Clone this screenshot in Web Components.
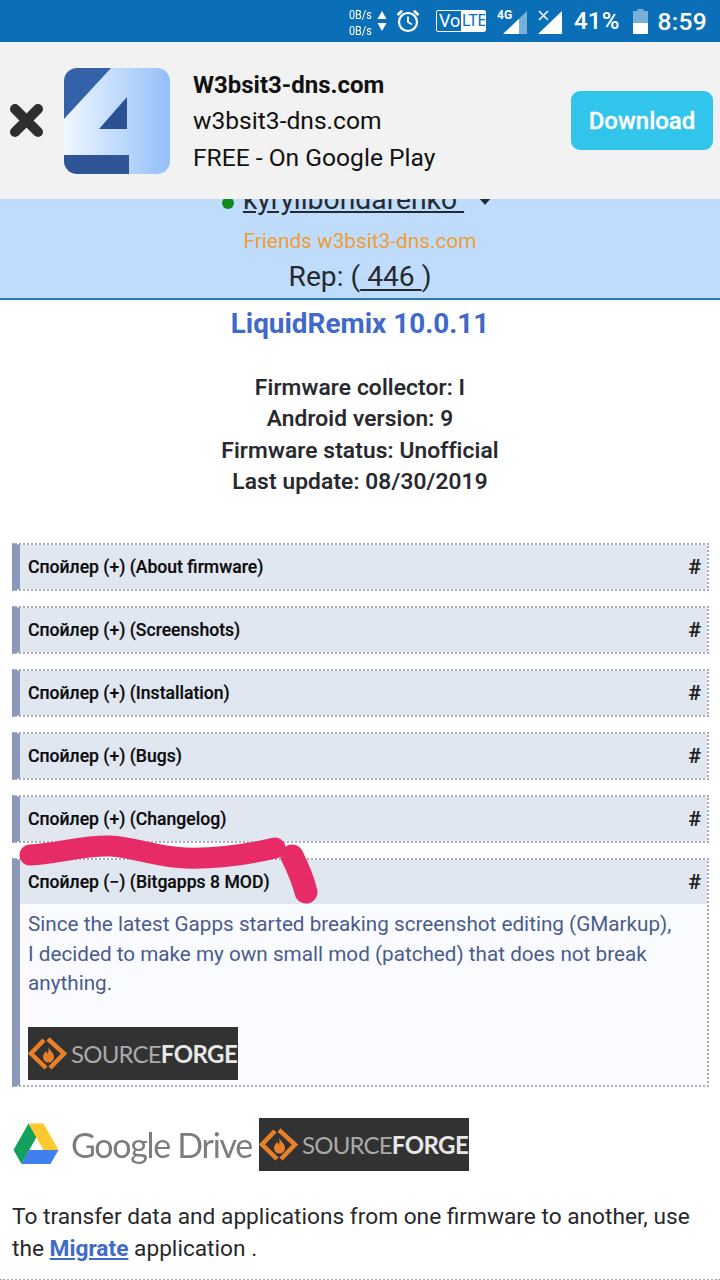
<!DOCTYPE html>
<html>
<head>
<meta charset="utf-8">
<style>
    html, body { margin: 0; padding: 0; background: #fff; }
    body { width: 720px; height: 1280px; overflow: hidden; position: relative; font-family: Roboto, "Noto Sans", sans-serif; }
</style>
</head>
<body>
<status-bar></status-bar>
<ad-banner></ad-banner>
<profile-band></profile-band>
<firmware-info></firmware-info>
<spoiler-list>
    <spoiler-box title="Спойлер (+) (About firmware)"></spoiler-box>
    <spoiler-box title="Спойлер (+) (Screenshots)"></spoiler-box>
    <spoiler-box title="Спойлер (+) (Installation)"></spoiler-box>
    <spoiler-box title="Спойлер (+) (Bugs)"></spoiler-box>
    <spoiler-box title="Спойлер (+) (Changelog)"></spoiler-box>
    <spoiler-box title="Спойлер (−) (Bitgapps 8 MOD)" open>
        Since the latest Gapps started breaking screenshot editing (GMarkup),<br>
        I decided to make my own small mod (patched) that does not break<br>
        anything.
        <sf-logo slot="media"></sf-logo>
    </spoiler-box>
</spoiler-list>
<download-links></download-links>
<migrate-note></migrate-note>
<pen-stroke></pen-stroke>

<script>
class StatusBar extends HTMLElement {
    constructor() {
        super();
        this.attachShadow({ mode: 'open' }).innerHTML = `
            <style>
                :host { display: flex; align-items: center; height: 42px; background: #0b6fb8; color: #fff; box-sizing: border-box; font-family: Roboto, sans-serif; position: relative; z-index: 1; padding-left: 349px; }
                .speed { display: flex; flex-direction: column; font-size: 13.500px; line-height: 16px; width: 27px; transform: scaleX(.8); transform-origin: left; margin-top: 2px; white-space: nowrap; }
                svg { display: block; flex: none; }
                .pct { font-size: 24px; font-weight: 500; margin-left: 12px; letter-spacing: .2px; }
                .time { font-size: 24.500px; font-weight: 500; margin-left: 10px; letter-spacing: .3px; }
                .volte { display: flex; margin-left: 15px; height: 22px; width: 50px; border: 1.500px solid #fff; box-sizing: border-box; font-size: 18px; line-height: 19px; border-radius: 2px; overflow: hidden; }
                .volte b { font-weight: 400; padding-left: 2px; width: 22px; flex: none; }
                .volte i { font-style: normal; flex: 1; background: #fff; color: #0b6fb8; font-size: 16px; letter-spacing: -.3px; padding-left: 1px; white-space: nowrap; }
            </style>
            <div class="speed"><span>0B/s</span><span>0B/s</span></div>
            <svg style="margin-left:1px" width="10" height="24" viewBox="0 0 10 24"><path d="M5 2l4.500 8H.5z" fill="#fff"/><path d="M5 22l4.500-8H.5z" fill="#fff"/></svg>
            <svg style="margin-left:8px" width="26" height="26" viewBox="0 0 26 26" fill="none" stroke="#fff"><circle cx="13" cy="14" r="9" stroke-width="2.200"/><path d="M13 8.500V14l4 2.500" stroke-width="1.800"/><path d="M2.500 7L7 2.800M23.500 7L19 2.800" stroke-width="2.600"/></svg>
            <div class="volte"><b>Vo</b><i>LTE</i></div>
            <svg style="margin-left:11px" width="31" height="28" viewBox="0 0 31 28"><text x="0" y="12" font-family="Roboto, sans-serif" font-size="12" font-weight="700" fill="#fff">4G</text><path d="M6 27L30 4v23z" fill="#fff" opacity=".45"/><path d="M6 27L22 12v15z" fill="#fff"/></svg>
            <svg style="margin-left:10px" width="24" height="28" viewBox="0 0 24 28"><path d="M0 27L24 4v23z" fill="#fff"/><path d="M1 4l9 9M10 4l-9 9" stroke="#fff" stroke-width="1.500"/></svg>
            <span class="pct">41%</span>
            <svg style="margin-left:13px" width="15" height="25" viewBox="0 0 15 25"><path d="M4.500 0h6v2H15v23H0V2h4.500z" fill="#fff" opacity=".45"/><path d="M0 14h15v11H0z" fill="#fff"/></svg>
            <span class="time">8:59</span>
        `;
    }
}

class AdBanner extends HTMLElement {
    constructor() {
        super();
        this.attachShadow({ mode: 'open' }).innerHTML = `
            <style>
                :host { display: flex; align-items: center; height: 157px; background: #f2f2f2; box-sizing: border-box; font-family: Roboto, sans-serif; color: #111; position: relative; z-index: 1; }
                .close { margin-left: 9px; flex: none; display: block; }
                .logo { margin-left: 20px; flex: none; display: block; }
                .text { margin-left: 23px; flex: 1; font-size: 24.600px; line-height: 36.500px; padding-top: 2px; white-space: nowrap; }
                .text b { display: block; font-weight: 700; font-size: 24px; }
                .text span { display: block; }
                .btn { width: 142px; height: 59px; margin-right: 7px; background: #31c5ec; color: #fff; font-size: 24px; font-weight: 500; -webkit-text-stroke: .3px #fff; border-radius: 9px; display: flex; align-items: center; justify-content: center; }
            </style>
            <svg class="close" width="35" height="35" viewBox="0 0 35 35"><path d="M6 6l23 23M29 6L6 29" stroke="#2f2d2d" stroke-width="10" stroke-linecap="round"/></svg>
            <svg class="logo" width="106" height="106" viewBox="0 0 106 106">
                <defs>
                    <linearGradient id="g" x1="0" x2="1" y1="0" y2="0"><stop offset="0" stop-color="#eff7ff"/><stop offset="1" stop-color="#93bff8"/></linearGradient>
                    <clipPath id="c"><rect width="106" height="106" rx="13"/></clipPath>
                </defs>
                <g clip-path="url(#c)">
                    <rect width="106" height="106" fill="url(#g)"/>
                    <path d="M0 0h47L0 51z" fill="#3561a8"/>
                    <path d="M63 29v32H35z" fill="#2a5192"/>
                    <path d="M0 87h65v19H0z" fill="#2f5597"/>
                </g>
            </svg>
            <div class="text"><b>W3bsit3-dns.com</b><span>w3bsit3-dns.com</span><span>FREE - On Google Play</span></div>
            <div class="btn">Download</div>
        `;
    }
}

// sits partly under the ad banner, as on the real page
class ProfileBand extends HTMLElement {
    constructor() {
        super();
        this.attachShadow({ mode: 'open' }).innerHTML = `
            <style>
                :host { display: block; margin-top: -30px; height: 131px; background: #bfdcfd; border-bottom: 2px solid #2a7cba; box-sizing: border-box; font-family: Roboto, sans-serif; color: #26292e; text-align: center; }
                .name { height: 30px; padding-top: 16px; font-size: 28.300px; line-height: 30px; display: flex; justify-content: center; align-items: center; padding-right: 7px; }
                .name u { text-underline-offset: 2px; }
                .dot { width: 12px; height: 12px; border-radius: 50%; background: #0f8a1f; margin-right: 9px; margin-top: 5px; }
                .arrow { width: 0; height: 0; border: 6.500px solid transparent; border-top: 7px solid #26292e; border-bottom: 0; margin-left: 15px; margin-top: 2px; }
                .group { color: #f09c30; font-size: 20.800px; line-height: 24px; margin-top: 14px; }
                .rep { font-size: 28.200px; line-height: 32px; margin-top: 8px; }
                .rep u { text-underline-offset: 3px; }
            </style>
            <div class="name"><i class="dot"></i><u>kyrylibondarenko&nbsp;</u><i class="arrow"></i></div>
            <div class="group">Friends w3bsit3-dns.com</div>
            <div class="rep">Rep: (<u>&nbsp;446&nbsp;</u>)</div>
        `;
    }
}

class FirmwareInfo extends HTMLElement {
    constructor() {
        super();
        this.attachShadow({ mode: 'open' }).innerHTML = `
            <style>
                :host { display: block; text-align: center; font-family: Roboto, sans-serif; color: #26282c; height: 243px; box-sizing: border-box; padding-top: 7px; }
                h1 { margin: 0; font-size: 27.900px; line-height: 34px; font-weight: 700; color: #4069c9; }
                .rows { margin-top: 31px; font-size: 22.700px; line-height: 31.400px; font-weight: 500; letter-spacing: .15px; -webkit-text-stroke: .2px #26282c; }
            </style>
            <h1>LiquidRemix 10.0.11</h1>
            <div class="rows">
                Firmware collector: I<br>
                Android version: 9<br>
                Firmware status: Unofficial<br>
                Last update: 08/30/2019
            </div>
        `;
    }
}

class SpoilerList extends HTMLElement {
    constructor() {
        super();
        this.attachShadow({ mode: 'open' }).innerHTML = `
            <style>
                :host { display: flex; flex-direction: column; gap: 15px; padding: 0 11px 0 12px; }
            </style>
            <slot></slot>
        `;
    }
}

class SpoilerBox extends HTMLElement {
    constructor() {
        super();
        const title = this.getAttribute('title');
        this.removeAttribute('title');
        this.attachShadow({ mode: 'open' }).innerHTML = `
            <style>
                :host { display: block; border: 2px dotted #a9adb3; border-left: 8px solid #8a99ba; box-sizing: border-box; font-family: Roboto, sans-serif; background: #fafbff; }
                .head { display: flex; align-items: center; justify-content: space-between; height: 44px; background: #e1e7f0; padding: 0 6px 0 8px; font-size: 17.600px; font-weight: 500; color: #0c0c0e; -webkit-text-stroke: .2px #0c0c0e; }
                .hash { font-size: 21px; color: #222; }
                .body { display: none; padding: 6px 8px 5px 8px; font-size: 20.700px; line-height: 29.500px; color: #4a5b8c; white-space: nowrap; }
                :host([open]) .body { display: block; }
                ::slotted([slot=media]) { margin-top: 28px; }
            </style>
            <div class="head"><span>${title}</span><span class="hash">#</span></div>
            <div class="body"><slot></slot><slot name="media"></slot></div>
        `;
    }
}

class SfLogo extends HTMLElement {
    constructor() {
        super();
        this.attachShadow({ mode: 'open' }).innerHTML = `
            <style>
                :host { display: flex; align-items: center; width: 210px; height: 53px; background: #333232; font-family: Lato, "Open Sans", sans-serif; flex: none; }
                svg { flex: none; display: block; }
                span { font-size: 24px; line-height: 53px; color: #a9a9a9; margin-left: 3px; letter-spacing: -.8px; white-space: nowrap; font-weight: 400; }
                b { color: #e8e8e8; font-weight: 700; letter-spacing: -.6px; }
            </style>
            <svg width="40" height="53" viewBox="0 0 40 53" fill="none">
                <path d="M16 13L3 26.500 18 41" stroke="#e8802a" stroke-width="4.500"/>
                <path d="M20 12l16 14.500L22 41" stroke="#e8802a" stroke-width="4.500"/>
                <path d="M20 19c1 4 6 6 6 11a5.500 5.500 0 0 1-11 0c0-3 2-4 3-6 1 1 1.500 2 1.500 3 1-2 1.500-5 .5-8z" fill="#e8802a"/>
            </svg>
            <span>SOURCE<b>FORGE</b></span>
        `;
    }
}

class DownloadLinks extends HTMLElement {
    constructor() {
        super();
        this.attachShadow({ mode: 'open' }).innerHTML = `
            <style>
                :host { display: flex; align-items: center; padding: 31px 0 0 13px; height: 84px; box-sizing: border-box; font-family: Lato, "Open Sans", sans-serif; }
                svg { display: block; flex: none; }
                .drive { width: 246px; display: flex; align-items: center; flex: none; }
                .name { margin-left: 12px; font-size: 34px; color: #7d7d7d; letter-spacing: -1.300px; white-space: nowrap; filter: blur(.4px); }
            </style>
            <div class="drive">
                <svg width="46" height="42" viewBox="0 0 46 42">
                    <path d="M15.500 0.500L0.500 27l8 14 15-27z" fill="#12a05c"/>
                    <path d="M15.500 0.500h15l15 26.500h-15z" fill="#fdc92f"/>
                    <path d="M8.500 41l7.500-14h29.500l-8 14z" fill="#3f80ee"/>
                </svg>
                <span class="name">Google Drive</span>
            </div>
            <sf-logo></sf-logo>
        `;
    }
}

class MigrateNote extends HTMLElement {
    constructor() {
        super();
        this.attachShadow({ mode: 'open' }).innerHTML = `
            <style>
                :host { display: block; padding: 30px 12px 0; font-family: Roboto, sans-serif; font-size: 22.700px; line-height: 32px; color: #28282c; height: 110px; box-sizing: border-box; border-bottom: 2px dotted #a9adb3; white-space: nowrap; }
                a { color: #4069c9; font-weight: 700; text-decoration: underline; }
            </style>
            To transfer data and applications from one firmware to another, use<br>
            the <a>Migrate</a> application .
        `;
    }
}

// hand drawn marker on top of the screenshot
class PenStroke extends HTMLElement {
    constructor() {
        super();
        this.attachShadow({ mode: 'open' }).innerHTML = `
            <style>
                :host { position: absolute; left: 0; top: 0; width: 720px; height: 1280px; pointer-events: none; z-index: 2; }
                svg { display: block; }
            </style>
            <svg width="720" height="1280" viewBox="0 0 720 1280" fill="none" stroke="#e72b66" stroke-linecap="round" stroke-linejoin="round">
                <path d="M30 855C60 853 85 845 110 846C135 847 155 857 185 858C215 859 245 855 275 848" stroke-width="21"/>
                <path d="M292 856C298 868 303 880 306 892" stroke-width="23"/>
            </svg>
        `;
    }
}

customElements.define('status-bar', StatusBar);
customElements.define('ad-banner', AdBanner);
customElements.define('profile-band', ProfileBand);
customElements.define('firmware-info', FirmwareInfo);
customElements.define('spoiler-list', SpoilerList);
customElements.define('spoiler-box', SpoilerBox);
customElements.define('sf-logo', SfLogo);
customElements.define('download-links', DownloadLinks);
customElements.define('migrate-note', MigrateNote);
customElements.define('pen-stroke', PenStroke);
</script>
</body>
</html>
